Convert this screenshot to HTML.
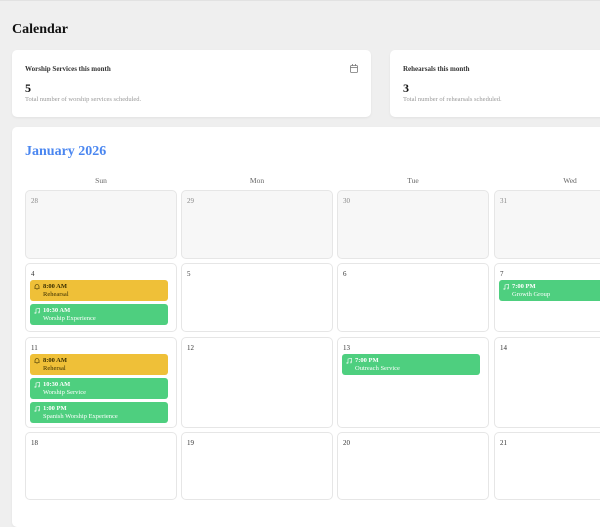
<!DOCTYPE html>
<html><head><meta charset="utf-8">
<style>
*{box-sizing:border-box;margin:0;padding:0}
body{width:600px;height:500px;overflow:hidden;background:#efefef;font-family:"Liberation Serif",serif;color:#222;position:relative;border-top:1px solid #e2e2e2}
.a{position:absolute}
.card{position:absolute;background:#fff;border-radius:5px;box-shadow:0 1px 2px rgba(0,0,0,.06)}
.cell{position:absolute;width:152px;border:1px solid #e6e6e6;border-radius:5px;background:#fff}
.cell.p{background:#f7f7f7}
.dn{position:absolute;left:5px;top:6px;font-size:7px;color:#333}
.cell.p .dn{color:#888}
.ev{position:absolute;left:4px;width:138px;height:21px;border-radius:3px;font-size:6.5px;line-height:8px;padding:3px 0 0 13px}
.ev b{display:block;font-weight:bold}
.y{background:#efc038;color:#3a2e00}
.g{background:#4ecf7f;color:#fff}
.ic{position:absolute;left:4px;top:4px;width:6px;height:6px}
.hd{position:absolute;top:175px;font-size:7.5px;color:#666;width:152px;text-align:center}
</style></head><body>
<div class="a" style="left:12px;top:21px;font-size:14px;font-weight:bold;color:#111">Calendar</div>

<div class="card" style="left:12px;top:49px;width:359px;height:67px">
 <div class="a" style="left:13px;top:15px;font-size:7px;font-weight:bold;color:#333">Worship Services this month</div>
 <svg class="a" style="left:338px;top:14px" width="8" height="9" viewBox="0 0 8 9"><rect x="0.5" y="1.5" width="7" height="7" rx="1" fill="none" stroke="#777" stroke-width="0.8"/><line x1="0.5" y1="3.5" x2="7.5" y2="3.5" stroke="#777" stroke-width="0.8"/><line x1="2.5" y1="0" x2="2.5" y2="2" stroke="#777" stroke-width="0.8"/><line x1="5.5" y1="0" x2="5.5" y2="2" stroke="#777" stroke-width="0.8"/></svg>
 <div class="a" style="left:13px;top:31px;font-size:12px;font-weight:bold;color:#111">5</div>
 <div class="a" style="left:13px;top:46px;font-size:6.5px;color:#999">Total number of worship services scheduled.</div>
</div>
<div class="card" style="left:390px;top:49px;width:230px;height:67px">
 <div class="a" style="left:13px;top:15px;font-size:7px;font-weight:bold;color:#333">Rehearsals this month</div>
 <div class="a" style="left:13px;top:31px;font-size:12px;font-weight:bold;color:#111">3</div>
 <div class="a" style="left:13px;top:46px;font-size:6.5px;color:#999">Total number of rehearsals scheduled.</div>
</div>

<div class="card" style="left:12px;top:126px;width:620px;height:400px">
 <div class="a" style="left:13px;top:17px;font-size:14px;font-weight:bold;color:#4a86f0">January 2026</div>
</div>

<div class="hd" style="left:25px">Sun</div>
<div class="hd" style="left:181px">Mon</div>
<div class="hd" style="left:337px">Tue</div>
<div class="hd" style="left:494px">Wed</div>

<div class="cell p" style="left:25px;top:189px;height:69px"><span class="dn">28</span></div>
<div class="cell p" style="left:181px;top:189px;height:69px"><span class="dn">29</span></div>
<div class="cell p" style="left:337px;top:189px;height:69px"><span class="dn">30</span></div>
<div class="cell p" style="left:494px;top:189px;height:69px"><span class="dn">31</span></div>

<div class="cell" style="left:25px;top:262px;height:69px"><span class="dn">4</span>
 <div class="ev y" style="top:16px"><svg class="ic" viewBox="0 0 6 6"><path d="M1 4.5V2.5a2 2 0 0 1 4 0v2zM0.5 4.5h5M2.5 5.5h1" fill="none" stroke="#3a2e00" stroke-width="0.6"/></svg><b>8:00 AM</b>Rehearsal</div>
 <div class="ev g" style="top:40px"><svg class="ic" viewBox="0 0 6 6"><path d="M2 5V1l3.5-.7V4.3" fill="none" stroke="#fff" stroke-width="0.6"/><circle cx="1.4" cy="5" r="0.7" fill="none" stroke="#fff" stroke-width="0.5"/><circle cx="4.9" cy="4.4" r="0.7" fill="none" stroke="#fff" stroke-width="0.5"/></svg><b>10:30 AM</b>Worship Experience</div>
</div>
<div class="cell" style="left:181px;top:262px;height:69px"><span class="dn">5</span></div>
<div class="cell" style="left:337px;top:262px;height:69px"><span class="dn">6</span></div>
<div class="cell" style="left:494px;top:262px;height:69px"><span class="dn">7</span>
 <div class="ev g" style="top:16px"><svg class="ic" viewBox="0 0 6 6"><path d="M2 5V1l3.5-.7V4.3" fill="none" stroke="#fff" stroke-width="0.6"/><circle cx="1.4" cy="5" r="0.7" fill="none" stroke="#fff" stroke-width="0.5"/><circle cx="4.9" cy="4.4" r="0.7" fill="none" stroke="#fff" stroke-width="0.5"/></svg><b>7:00 PM</b>Growth Group</div>
</div>

<div class="cell" style="left:25px;top:336px;height:91px"><span class="dn">11</span>
 <div class="ev y" style="top:16px"><svg class="ic" viewBox="0 0 6 6"><path d="M1 4.5V2.5a2 2 0 0 1 4 0v2zM0.5 4.5h5M2.5 5.5h1" fill="none" stroke="#3a2e00" stroke-width="0.6"/></svg><b>8:00 AM</b>Rehersal</div>
 <div class="ev g" style="top:40px"><svg class="ic" viewBox="0 0 6 6"><path d="M2 5V1l3.5-.7V4.3" fill="none" stroke="#fff" stroke-width="0.6"/><circle cx="1.4" cy="5" r="0.7" fill="none" stroke="#fff" stroke-width="0.5"/><circle cx="4.9" cy="4.4" r="0.7" fill="none" stroke="#fff" stroke-width="0.5"/></svg><b>10:30 AM</b>Worship Service</div>
 <div class="ev g" style="top:64px"><svg class="ic" viewBox="0 0 6 6"><path d="M2 5V1l3.5-.7V4.3" fill="none" stroke="#fff" stroke-width="0.6"/><circle cx="1.4" cy="5" r="0.7" fill="none" stroke="#fff" stroke-width="0.5"/><circle cx="4.9" cy="4.4" r="0.7" fill="none" stroke="#fff" stroke-width="0.5"/></svg><b>1:00 PM</b>Spanish Worship Experience</div>
</div>
<div class="cell" style="left:181px;top:336px;height:91px"><span class="dn">12</span></div>
<div class="cell" style="left:337px;top:336px;height:91px"><span class="dn">13</span>
 <div class="ev g" style="top:16px"><svg class="ic" viewBox="0 0 6 6"><path d="M2 5V1l3.5-.7V4.3" fill="none" stroke="#fff" stroke-width="0.6"/><circle cx="1.4" cy="5" r="0.7" fill="none" stroke="#fff" stroke-width="0.5"/><circle cx="4.9" cy="4.4" r="0.7" fill="none" stroke="#fff" stroke-width="0.5"/></svg><b>7:00 PM</b>Outreach Service</div>
</div>
<div class="cell" style="left:494px;top:336px;height:91px"><span class="dn">14</span></div>

<div class="cell" style="left:25px;top:431px;height:68px"><span class="dn">18</span></div>
<div class="cell" style="left:181px;top:431px;height:68px"><span class="dn">19</span></div>
<div class="cell" style="left:337px;top:431px;height:68px"><span class="dn">20</span></div>
<div class="cell" style="left:494px;top:431px;height:68px"><span class="dn">21</span></div>
</body></html>
